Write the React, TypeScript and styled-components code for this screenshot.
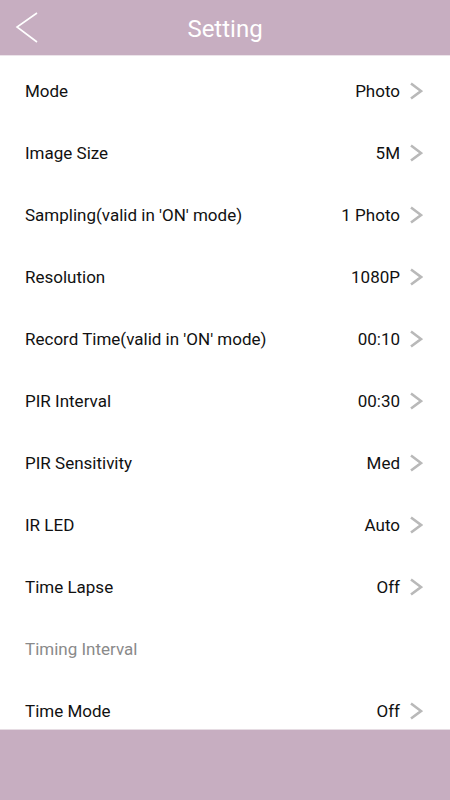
import React from "react";
import styled, {createGlobalStyle} from "styled-components";

const GlobalStyle = createGlobalStyle`
    html, body {
        margin: 0;
        padding: 0;
        background: #ffffff;
        font-family: Roboto, "Noto Sans", "Liberation Sans", sans-serif;
    }
`

const Screen = styled.div`
    width: 450px;
    height: 800px;
    display: flex;
    flex-direction: column;
    overflow: hidden;
`

const NavBar = styled.div`
    height: 56px;
    flex-shrink: 0;
    background: #c7aec1;
    display: flex;
    align-items: center;
    border-bottom: 1px solid #ece4ea;
    box-sizing: border-box;

    .back {
        width: 56px;
        height: 56px;
        display: flex;
        align-items: center;
        justify-content: center;
    }

    .title {
        flex: 1;
        text-align: center;
        color: #ffffff;
        font-size: 24px;
        margin-right: 56px;
        margin-top: 2px;
    }
`

const List = styled.div`
    flex: 1;
    overflow: hidden;
    padding-top: 4px;
`

const Row = styled.div`
    height: 62px;
    display: flex;
    align-items: center;
    justify-content: space-between;
    padding: 0 27px 0 25px;
    font-size: 17px;
    color: #111111;
`

const Section = styled(Row)`
    color: #8a8a8a;
`

const Value = styled.span`
    display: flex;
    align-items: center;
    gap: 9px;
`

const Footer = styled.div`
    height: 70px;
    flex-shrink: 0;
    background: #c7aec1;
    border-top: 1px solid #e6dce3;
`

const Chevron = () => (
    <svg width="14" height="18" viewBox="0 0 14 18">
        <path d="M2 1.5 L12 9 L2 16.5" fill="none" stroke="#b9b9b9" strokeWidth="2.6"/>
    </svg>
)

const items: Array<[string, string | null]> = [
    ["Mode", "Photo"],
    ["Image Size", "5M"],
    ["Sampling(valid in 'ON' mode)", "1 Photo"],
    ["Resolution", "1080P"],
    ["Record Time(valid in 'ON' mode)", "00:10"],
    ["PIR Interval", "00:30"],
    ["PIR Sensitivity", "Med"],
    ["IR LED", "Auto"],
    ["Time Lapse", "Off"],
    ["Timing Interval", null],
    ["Time Mode", "Off"],
]

const App = () => {
    return (
        <Screen>
            <GlobalStyle/>
            <NavBar>
                <div className="back">
                    <svg width="30" height="34" viewBox="0 0 30 34">
                        <path d="M24 2 L4 16 L24 31" fill="none" stroke="#ffffff" strokeWidth="1.6"/>
                    </svg>
                </div>
                <span className="title">Setting</span>
            </NavBar>
            <List>
                {items.map(([label, value]) =>
                    value === null ? (
                        <Section key={label}>{label}</Section>
                    ) : (
                        <Row key={label}>
                            <span>{label}</span>
                            <Value>{value}<Chevron/></Value>
                        </Row>
                    )
                )}
            </List>
            <Footer/>
        </Screen>
    )
}

export default App
